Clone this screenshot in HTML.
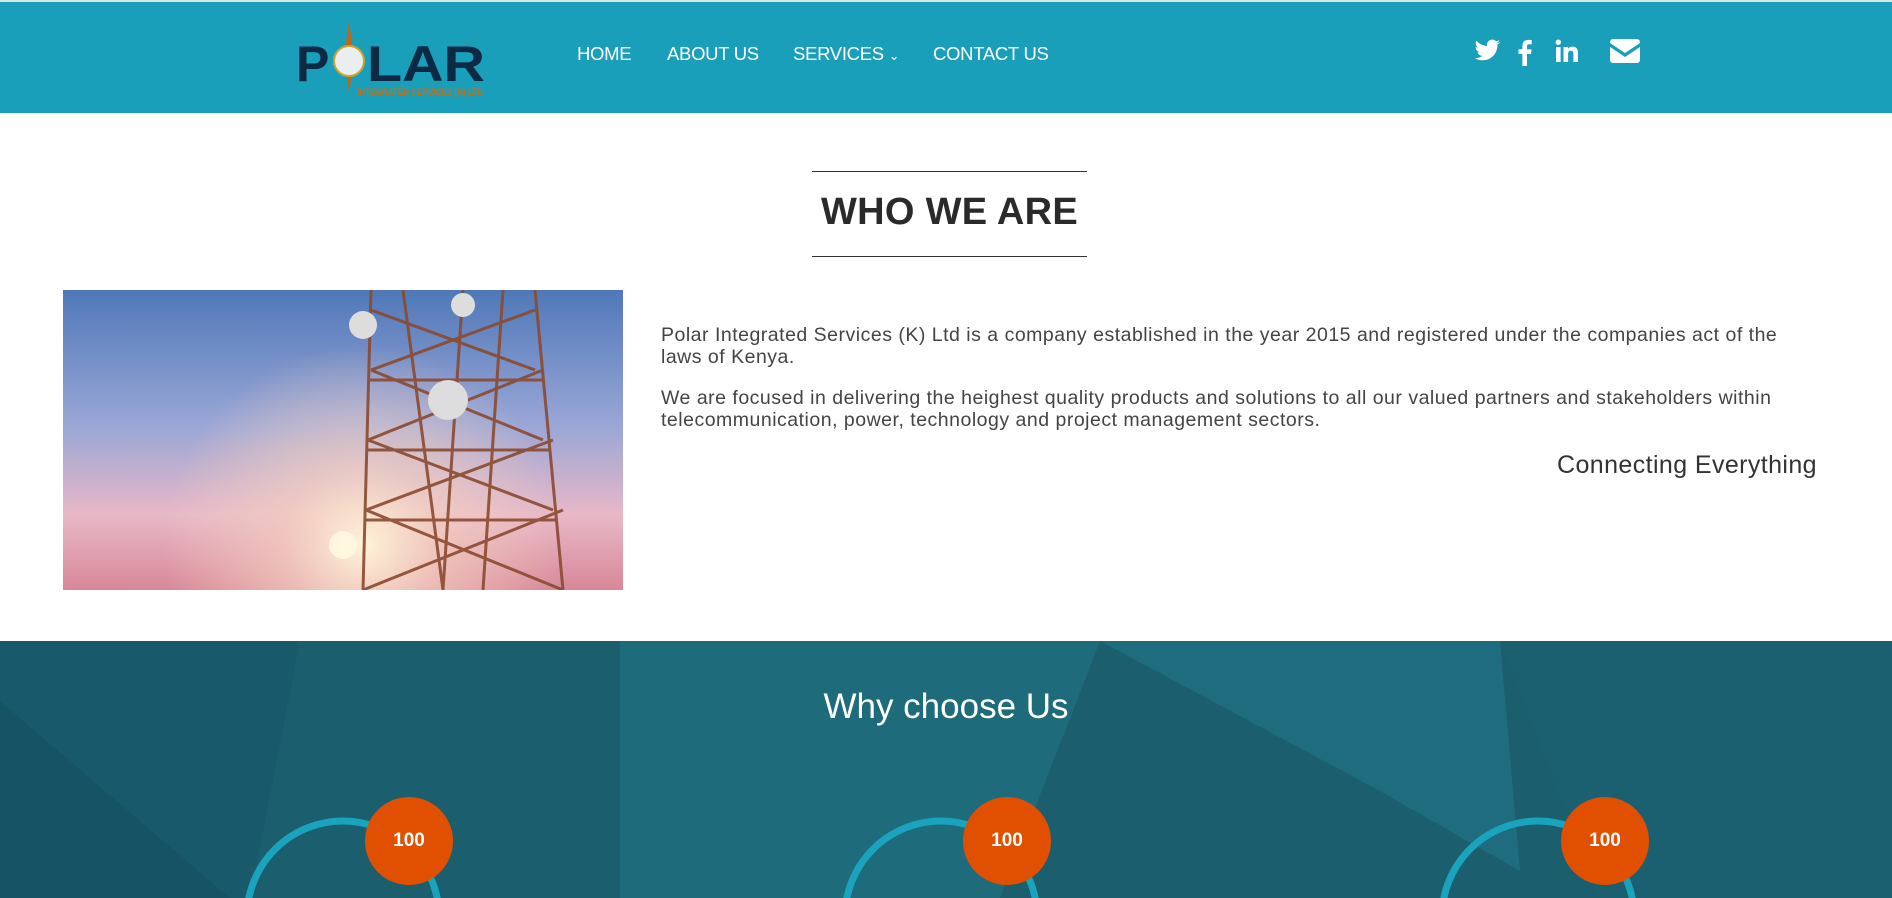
<!DOCTYPE html>
<html><head><meta charset="utf-8"><style>
*{margin:0;padding:0;box-sizing:border-box}
body{width:1892px;height:898px;overflow:hidden;background:#fff;font-family:"Liberation Sans",sans-serif;position:relative}
.hdr{position:absolute;left:0;top:0;width:1892px;height:113px;background:#1a9fba;border-top:2px solid #d8e6ea}
.nav a{position:absolute;top:41px;color:#fff;font-size:18.5px;text-decoration:none;letter-spacing:-0.3px}
.abs{position:absolute}
.p{position:absolute;left:661px;width:1135px;font-size:19.5px;line-height:22px;color:#444;letter-spacing:0.5px}
.dark{position:absolute;left:0;top:641px;width:1892px;height:257px;background:#1b5f6f;overflow:hidden}
.badge{position:absolute;width:88px;height:88px;border-radius:50%;background:#e05000;color:#fff;font-weight:bold;font-size:19px;text-align:center;line-height:88px}
</style></head><body>
<div class="hdr">
  <svg class="abs" style="left:290px;top:15px" width="200" height="90" viewBox="0 0 200 90">
    <polygon points="59,4 64,40 59,76 54,40" fill="#b86a1a"/>
    <text x="6" y="64" font-family="Liberation Sans" font-weight="bold" font-size="50" fill="#0d2a44">P</text>
    <circle cx="59" cy="44" r="15" fill="#e8eef2" stroke="#d4a22a" stroke-width="2"/>
    <text x="77" y="64" font-family="Liberation Sans" font-weight="bold" font-size="50" fill="#0d2a44" textLength="118" lengthAdjust="spacingAndGlyphs">LAR</text>
    <text x="67" y="78" font-family="Liberation Sans" font-weight="bold" font-size="9" fill="#c0701a" textLength="126" lengthAdjust="spacingAndGlyphs">INTEGRATED SERVICES (K) LTD</text>
  </svg>
  <div class="nav">
    <a style="left:577px">HOME</a>
    <a style="left:667px">ABOUT US</a>
    <a style="left:793px">SERVICES <span style="font-size:13px">&#8964;</span></a>
    <a style="left:933px">CONTACT US</a>
  </div>
  <svg class="abs" style="left:1470px;top:34px" width="180" height="32" viewBox="0 0 180 32">
    <path fill="#fff" d="M30 6c-1 .5-2 .8-3 .9 1.1-.7 1.9-1.7 2.3-2.9-1 .6-2.1 1-3.3 1.3a5.2 5.2 0 0 0-8.9 4.7C12.8 9.8 9 7.7 6.4 4.6a5.2 5.2 0 0 0 1.6 7c-.9 0-1.7-.3-2.4-.6 0 2.5 1.8 4.6 4.2 5.1-.8.2-1.6.2-2.3.1.7 2.1 2.6 3.6 4.9 3.6A10.5 10.5 0 0 1 4.6 22c2.3 1.5 5.1 2.3 8 2.3 9.6 0 14.8-7.9 14.8-14.8v-.7c1-.7 1.9-1.6 2.6-2.8z"/>
    <path fill="#fff" d="M57 30V18h4l.6-4.6H57v-3c0-1.3.4-2.2 2.3-2.2h2.4V4.1c-.4-.1-1.9-.2-3.5-.2-3.5 0-5.8 2.1-5.8 6v3.4h-3.9V18h3.9v12z"/>
    <path fill="#fff" d="M86 11h4.6v15H86zM88.3 3.5a2.7 2.7 0 1 1 0 5.4 2.7 2.7 0 0 1 0-5.4zM93.5 11h4.4v2c.6-1.2 2.2-2.4 4.5-2.4 4.7 0 5.6 3.1 5.6 7.2V26h-4.6v-7.3c0-1.7 0-4-2.5-4s-2.8 1.9-2.8 3.9V26h-4.6z"/>
    <path fill="#fff" d="M143 3h24a3 3 0 0 1 3 3v1l-15 10-15-10V6a3 3 0 0 1 3-3zM140 11l15 10 15-10v13a3 3 0 0 1-3 3h-24a3 3 0 0 1-3-3z"/>
  </svg>
</div>

<div class="abs" style="left:812px;top:171px;width:275px;height:1px;background:#333"></div>
<div class="abs" style="left:812px;top:256px;width:275px;height:1px;background:#333"></div>
<div class="abs" style="left:812px;top:191px;width:275px;text-align:center;font-size:38px;font-weight:bold;color:#2a2a2a;letter-spacing:0.3px">WHO WE ARE</div>

<svg class="abs" style="left:63px;top:290px" width="560" height="300" viewBox="0 0 560 300">
  <defs>
    <linearGradient id="sky" x1="0" y1="0" x2="0" y2="1">
      <stop offset="0" stop-color="#4f78b8"/><stop offset="0.45" stop-color="#9aa6d6"/>
      <stop offset="0.75" stop-color="#e8b8c8"/><stop offset="1" stop-color="#d88898"/>
    </linearGradient>
    <radialGradient id="sun" cx="300" cy="255" r="200" gradientUnits="userSpaceOnUse">
      <stop offset="0" stop-color="#fff4d8"/><stop offset="0.4" stop-color="#f4d0c0" stop-opacity="0.7"/><stop offset="1" stop-color="#f4d0c0" stop-opacity="0"/>
    </radialGradient>
  </defs>
  <rect width="560" height="300" fill="url(#sky)"/>
  <rect width="560" height="300" fill="url(#sun)"/>
  <g stroke="#8a4a30" stroke-width="3" fill="none" opacity="0.9">
    <path d="M308 0L300 300M400 0L380 300M472 0L500 300"/>
    <path d="M308 20L472 80M472 20L308 80M308 80L480 150M480 80L305 150M305 150L490 220M490 150L303 220M303 220L500 300M500 220L300 300M340 0L380 300M440 0L420 300"/>
    <path d="M305 90L480 90M303 160L488 160M302 230L495 230"/>
  </g>
  <g fill="#ddd">
    <circle cx="300" cy="35" r="14"/><circle cx="400" cy="15" r="12"/><circle cx="385" cy="110" r="20"/>
  </g>
  <circle cx="280" cy="255" r="14" fill="#fff8e0" opacity="0.9"/>
</svg>

<div class="p" style="top:324px">Polar Integrated Services (K) Ltd is a company established in the year 2015 and registered under the companies act of the laws of Kenya.</div>
<div class="p" style="top:387px">We are focused in delivering the heighest quality products and solutions to all our valued partners and stakeholders within telecommunication, power, technology and project management sectors.</div>
<div class="abs" style="right:75px;top:451px;font-size:25px;color:#333;letter-spacing:0.4px">Connecting Everything</div>

<div class="dark">
  <svg class="abs" style="left:0;top:0" width="1892" height="257">
    <polygon points="0,0 300,0 250,257 0,257" fill="#17566a" opacity="0.6"/>
    <polygon points="620,0 1100,0 1000,257 620,257" fill="#22778a" opacity="0.5"/>
    <polygon points="1100,0 1500,0 1520,230 1380,150" fill="#237a8d" opacity="0.5"/>
    <polygon points="1500,0 1892,0 1892,257 1600,257" fill="#1a6274" opacity="0.5"/>
    <polygon points="0,60 230,257 0,257" fill="#164f60" opacity="0.6"/>
    <g fill="none" stroke="#1aa3bd" stroke-width="7">
      <circle cx="343" cy="276" r="96"/>
      <circle cx="941" cy="276" r="96"/>
      <circle cx="1538" cy="276" r="96"/>
    </g>
  </svg>
  <div class="abs" style="left:0;width:1892px;top:46px;text-align:center;font-size:35px;color:#fff">Why choose Us</div>
  <div class="badge" style="left:365px;top:156px">100</div>
  <div class="badge" style="left:963px;top:156px">100</div>
  <div class="badge" style="left:1561px;top:156px">100</div>
</div>
</body></html>
